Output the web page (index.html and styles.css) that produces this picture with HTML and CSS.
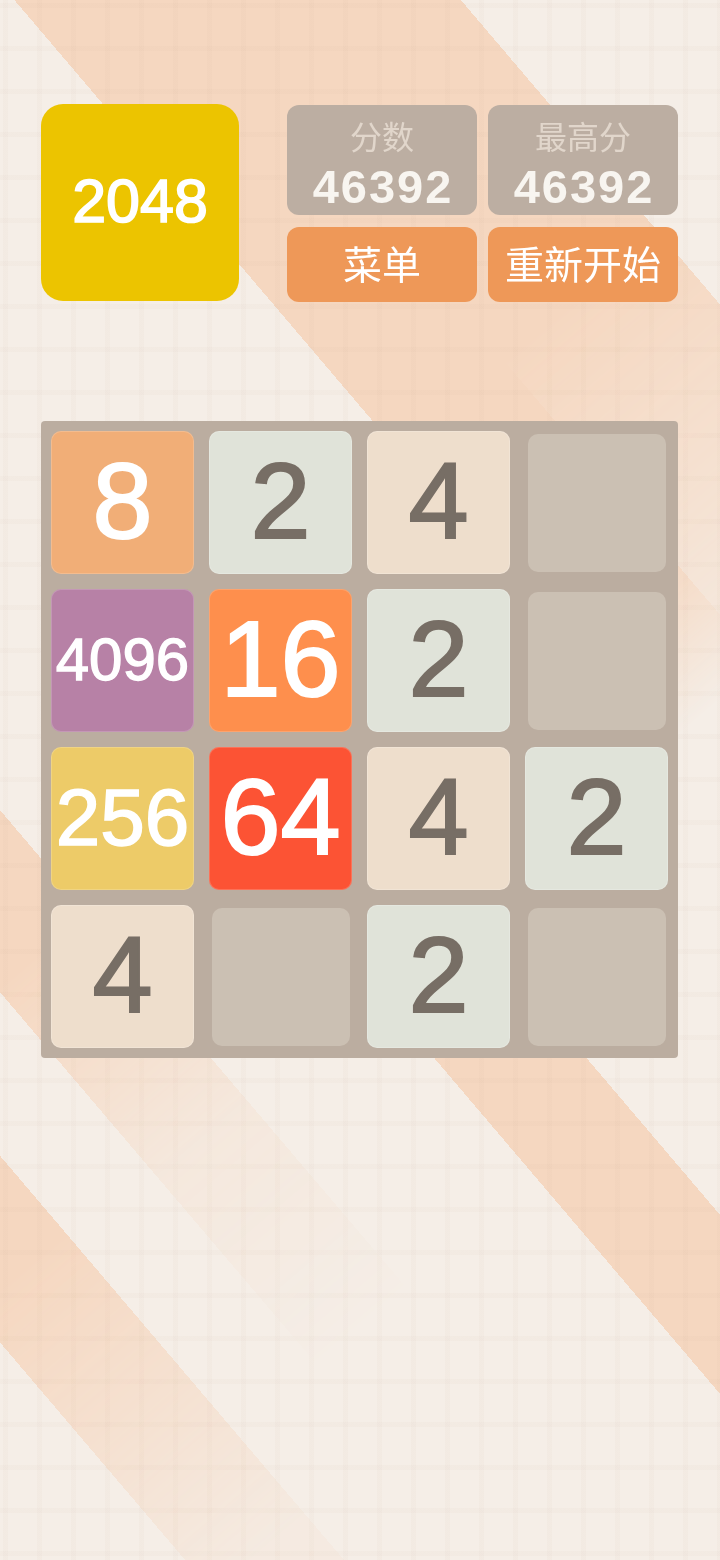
FILE: index.html
```html
<!DOCTYPE html>
<html lang="zh-CN">
<head>
<meta charset="utf-8">
<meta name="viewport" content="width=720">
<title>2048</title>
<link rel="stylesheet" href="styles.css">
</head>
<body>
<div class="bg" aria-hidden="true">
  <div class="band band-1"></div>
  <div class="band band-2"></div>
  <div class="band band-3"></div>
  <div class="band band-4"></div>
  <div class="band band-5"></div>
  <div class="grid"></div>
</div>
<main class="game">
  <header class="top">
    <div class="logo">2048</div>
    <div class="panel">
      <div class="score"><span class="score-label">分数</span><span class="score-value">46392</span></div>
      <div class="score"><span class="score-label">最高分</span><span class="score-value">46392</span></div>
      <button class="btn">菜单</button>
      <button class="btn">重新开始</button>
    </div>
  </header>
  <section class="board">
    <div class="tile t8 big">8</div>
    <div class="tile t2 big">2</div>
    <div class="tile t4 big">4</div>
    <div class="cell"></div>

    <div class="tile t4096 four">4096</div>
    <div class="tile t16 big">16</div>
    <div class="tile t2 big">2</div>
    <div class="cell"></div>

    <div class="tile t256 three">256</div>
    <div class="tile t64 big">64</div>
    <div class="tile t4 big">4</div>
    <div class="tile t2 big">2</div>

    <div class="tile t4 big">4</div>
    <div class="cell"></div>
    <div class="tile t2 big">2</div>
    <div class="cell"></div>
  </section>
</main>
</body>
</html>
```
FILE: styles.css
```css
html, body {
  margin: 0;
  padding: 0;
}

body {
  background: #f5eee7;
  font-family: "Noto Sans CJK SC", "Noto Sans", sans-serif;
  min-height: 1560px;
}

/* decorative background */
.bg {
  position: fixed;
  inset: 0;
  z-index: 0;
  overflow: hidden;
}

.band {
  position: absolute;
  inset: 0;
}

.band-1 {
  background: linear-gradient(49.6deg, transparent 141px, #f5d7c0 141px, #f5d7c0 262px, transparent 262px);
  -webkit-mask-image: linear-gradient(139.6deg, #000 980px, rgba(0,0,0,.15) 1350px);
  mask-image: linear-gradient(139.6deg, #000 980px, rgba(0,0,0,.15) 1350px);
}

.band-2 {
  background: linear-gradient(49.6deg, transparent 368px, #f5d7c0 368px, #f5d7c0 486px, transparent 486px);
  -webkit-mask-image: linear-gradient(139.6deg, #000 750px, rgba(0,0,0,.25) 1000px, transparent 1250px);
  mask-image: linear-gradient(139.6deg, #000 750px, rgba(0,0,0,.25) 1000px, transparent 1250px);
}

.band-3 {
  background: linear-gradient(49.6deg, transparent 656px, #f5d7c0 656px, #f5d7c0 772px, transparent 772px);
  -webkit-mask-image: linear-gradient(139.6deg, transparent 600px, #000 1100px);
  mask-image: linear-gradient(139.6deg, transparent 600px, #000 1100px);
}

.band-4 {
  background: linear-gradient(49.6deg, transparent 1022px, #f5d7c0 1022px, #f5d7c0 1161px, transparent 1161px);
  -webkit-mask-image: linear-gradient(139.6deg, #000 850px, transparent 1000px);
  mask-image: linear-gradient(139.6deg, #000 850px, transparent 1000px);
}

.band-5 {
  background: linear-gradient(49.6deg, transparent 1161px, #f5d7c0 1161px, #f5d7c0 1362px, transparent 1362px);
  -webkit-mask-image: linear-gradient(139.6deg, #000 600px, rgba(0,0,0,.5) 850px, transparent 1050px);
  mask-image: linear-gradient(139.6deg, #000 600px, rgba(0,0,0,.5) 850px, transparent 1050px);
}

.grid {
  position: absolute;
  inset: 0;
  background-image:
    linear-gradient(90deg, rgba(170, 130, 95, 0.028) 0, rgba(170, 130, 95, 0.028) 5px, transparent 5px),
    linear-gradient(180deg, rgba(170, 130, 95, 0.028) 0, rgba(170, 130, 95, 0.028) 5px, transparent 5px);
  background-size: 34px 43px;
  background-position: 3px 3px;
}

/* layout */
.game {
  position: relative;
  z-index: 1;
  padding: 104px 42px 0 41px;
}

.top {
  display: flex;
  gap: 48px;
}

.logo {
  width: 198px;
  height: 197px;
  border-radius: 22px;
  background: #ecc400;
  color: #fff;
  font-family: "Liberation Sans", Arial, sans-serif;
  font-weight: 400;
  -webkit-text-stroke: 1.6px #fff;
  font-size: 61px;
  line-height: 1;
  display: flex;
  align-items: center;
  justify-content: center;
  padding-bottom: 2px;
  box-sizing: border-box;
}

.panel {
  display: grid;
  grid-template-columns: 190px 190px;
  grid-template-rows: 110px 75px;
  column-gap: 11px;
  row-gap: 12px;
  margin-top: 1px;
}

.score {
  background: #bcaea2;
  border-radius: 12px;
  display: flex;
  flex-direction: column;
  align-items: center;
  padding-top: 12px;
  box-sizing: border-box;
}

.score-label {
  font-size: 32px;
  line-height: 36px;
  color: #e1d6cb;
}

.score-value {
  font-family: "Liberation Sans", Arial, sans-serif;
  font-size: 47px;
  line-height: 47px;
  font-weight: 700;
  letter-spacing: 2px;
  margin-right: -2px;
  color: #f8f5f0;
  margin-top: 10px;
}

.btn {
  border: 0;
  padding: 0 0 4px;
  margin: 0;
  background: #ee9858;
  color: #fff;
  font-family: inherit;
  font-size: 39px;
  line-height: 1;
  border-radius: 12px;
}

/* board */
.board {
  margin-top: 119px;
  background: #bbada0;
  border-radius: 4px;
  padding: 10px;
  display: grid;
  grid-template-columns: repeat(4, 1fr);
  grid-auto-rows: 143px;
  gap: 15px;
}

.cell {
  margin: 2.5px;
  border-radius: 10px;
  background: #cbc0b3;
}

.tile {
  border-radius: 10px;
  display: flex;
  align-items: center;
  justify-content: center;
  color: #fff;
  font-family: "Liberation Sans", Arial, sans-serif;
  line-height: 1;
  box-shadow: inset 0 0 0 1px rgba(255, 255, 255, 0.18);
  box-sizing: border-box;
}

.big { font-size: 108px; padding-bottom: 3px; -webkit-text-stroke: 2px currentColor; }
.three { font-size: 80px; padding-bottom: 2px; -webkit-text-stroke: 1.6px currentColor; }
.four { font-size: 60px; padding-bottom: 2px; -webkit-text-stroke: 1.3px currentColor; }

.t2 { background: #e0e3d9; color: #776e65; }
.t4 { background: #eedecc; color: #776e65; }
.t8 { background: #f1ae77; }
.t16 { background: #fe8f4d; }
.t64 { background: #fc5334; }
.t256 { background: #edcb68; }
.t4096 { background: #b781a6; }
```
